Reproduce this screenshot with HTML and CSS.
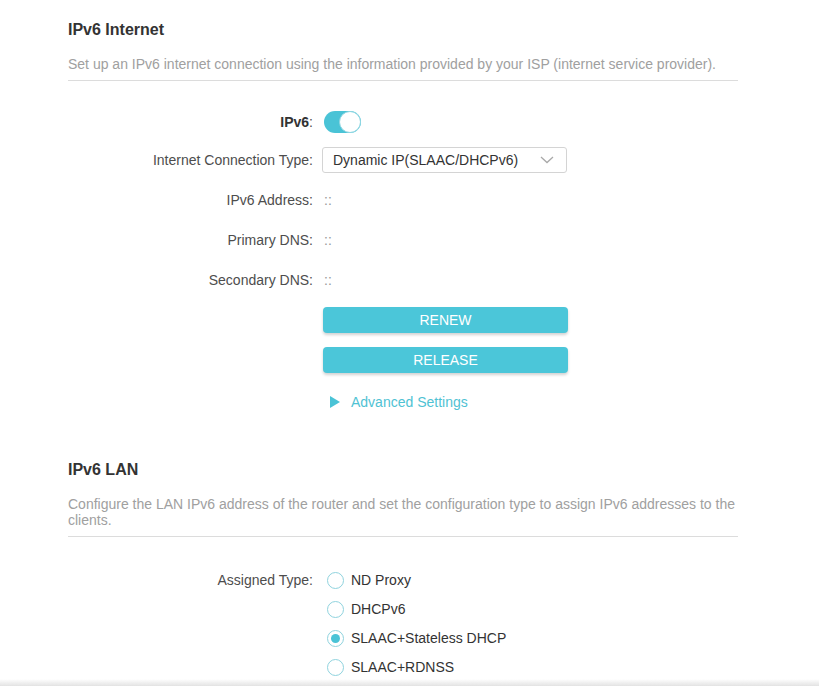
FILE: index.html
```html
<!DOCTYPE html>
<html lang="en">
<head>
  <meta charset="UTF-8">
  <title>IPv6</title>
  <link rel="stylesheet" href="styles.css">
</head>
<body>
  <div class="page">
    <!-- IPv6 Internet -->
    <section class="panel">
      <h2 class="panel-title">IPv6 Internet</h2>
      <p class="panel-desc">Set up an IPv6 internet connection using the information provided by your ISP (internet service provider).</p>

      <div class="form">
        <div class="row row-toggle">
          <label class="row-label"><b class="strong">IPv6</b>:</label>
          <div class="row-value">
            <span class="toggle on"><span class="toggle-knob"></span></span>
          </div>
        </div>
        <div class="row">
          <label class="row-label">Internet Connection Type:</label>
          <div class="row-value">
            <div class="select">
              <span>Dynamic IP(SLAAC/DHCPv6)</span>
              <svg class="select-arrow" width="14" height="8" viewBox="0 0 14 8"><path d="M1 1l6 5.5L13 1" fill="none" stroke="#a9a9a9" stroke-width="1.3"/></svg>
            </div>
          </div>
        </div>
        <div class="row">
          <label class="row-label">IPv6 Address:</label>
          <div class="row-value text-muted">::</div>
        </div>
        <div class="row">
          <label class="row-label">Primary DNS:</label>
          <div class="row-value text-muted">::</div>
        </div>
        <div class="row">
          <label class="row-label">Secondary DNS:</label>
          <div class="row-value text-muted">::</div>
        </div>
        <div class="row">
          <span class="row-label"></span>
          <div class="row-value"><button class="btn">RENEW</button></div>
        </div>
        <div class="row">
          <span class="row-label"></span>
          <div class="row-value"><button class="btn">RELEASE</button></div>
        </div>
        <div class="row">
          <span class="row-label"></span>
          <div class="row-value">
            <a class="advanced"><span class="triangle"></span>Advanced Settings</a>
          </div>
        </div>
      </div>
    </section>

    <!-- IPv6 LAN -->
    <section class="panel panel-lan">
      <h2 class="panel-title">IPv6 LAN</h2>
      <p class="panel-desc">Configure the LAN IPv6 address of the router and set the configuration type to assign IPv6 addresses to the clients.</p>

      <div class="form form-lan">
        <div class="radio-row">
          <label class="row-label">Assigned Type:</label>
          <div class="radio-list">
            <div class="radio"><span class="radio-dot"></span>ND Proxy</div>
            <div class="radio"><span class="radio-dot"></span>DHCPv6</div>
            <div class="radio"><span class="radio-dot checked"></span>SLAAC+Stateless DHCP</div>
            <div class="radio"><span class="radio-dot"></span>SLAAC+RDNSS</div>
          </div>
        </div>
      </div>
    </section>
  </div>

  <div class="bottom-shade"></div>
</body>
</html>
```

FILE: styles.css
```css
/* base */
* {
  box-sizing: border-box;
}

body {
  margin: 0;
  background: #fff;
  font-family: "Liberation Sans", Arial, sans-serif;
  font-size: 14px;
  color: #4d4d4d;
}

.page {
  width: 670px;
  margin-left: 68px;
  padding-top: 20px;
}

/* panel header */
.panel-title {
  margin: 0;
  font-size: 16px;
  line-height: 20px;
  font-weight: bold;
  color: #333;
}

.panel-desc {
  margin: 16px 0 0;
  padding-bottom: 8px;
  line-height: 16px;
  color: #a0a0a0;
  border-bottom: 1px solid #dcdcdc;
}

.panel-lan {
  margin-top: 47px;
}

/* form rows */
.form {
  padding-top: 28px;
}

.row {
  display: flex;
  align-items: center;
  height: 26px;
  margin-bottom: 14px;
}

.row-toggle {
  margin-bottom: 12px;
}

.row-label {
  width: 245px;
  flex-shrink: 0;
  text-align: right;
  line-height: 16px;
}

.strong {
  font-weight: bold;
  color: #333;
}

.row-value {
  margin-left: 9px;
  display: flex;
  align-items: center;
}

.text-muted {
  color: #999;
  margin-left: 11px;
}

/* toggle */
.toggle {
  position: relative;
  display: inline-block;
  width: 37px;
  height: 22px;
  border-radius: 11px;
  background: #4ac3d6;
  margin-left: 2px;
}

.toggle-knob {
  position: absolute;
  top: 0;
  right: 0;
  width: 22px;
  height: 22px;
  border-radius: 50%;
  background: #fff;
  border: 1px solid #8fd6e2;
}

/* select */
.select {
  display: flex;
  align-items: center;
  justify-content: space-between;
  width: 245px;
  height: 26px;
  padding: 0 12px 0 10px;
  border: 1px solid #d4d4d4;
  border-radius: 3px;
  color: #333;
}

/* buttons */
.btn {
  width: 245px;
  height: 26px;
  margin-left: 1px;
  border: 0;
  border-radius: 4px;
  background: #4bc6d9;
  color: #fff;
  font-family: inherit;
  font-size: 14px;
  box-shadow: 0 2px 3px rgba(0, 0, 0, 0.18);
}

.advanced {
  display: flex;
  align-items: center;
  color: #4fc2d3;
  margin-left: 8px;
  margin-top: 4px;
}

.triangle {
  display: inline-block;
  width: 0;
  height: 0;
  border-top: 6px solid transparent;
  border-bottom: 6px solid transparent;
  border-left: 10px solid #4ac3d6;
  margin-right: 11px;
}

/* radios */
.form-lan {
  padding-top: 33px;
}

.radio-row {
  display: flex;
  align-items: flex-start;
}

.radio-row .row-label {
  line-height: 20px;
}

.radio-list {
  margin-left: 14px;
  display: flex;
  flex-direction: column;
  gap: 9px;
}

.radio {
  display: flex;
  align-items: center;
  height: 20px;
  color: #333;
}

.radio-dot {
  position: relative;
  width: 17px;
  height: 17px;
  border-radius: 50%;
  border: 1px solid #8fd3de;
  margin-right: 7px;
}

.radio-dot.checked::after {
  content: "";
  position: absolute;
  top: 3px;
  left: 3px;
  width: 9px;
  height: 9px;
  border-radius: 50%;
  background: #4ac3d6;
}

/* fixed footer shadow */
.bottom-shade {
  position: fixed;
  left: 0;
  right: 0;
  bottom: 0;
  height: 7px;
  background: linear-gradient(to bottom, rgba(230, 230, 230, 0), #e3e3e3);
}
```
